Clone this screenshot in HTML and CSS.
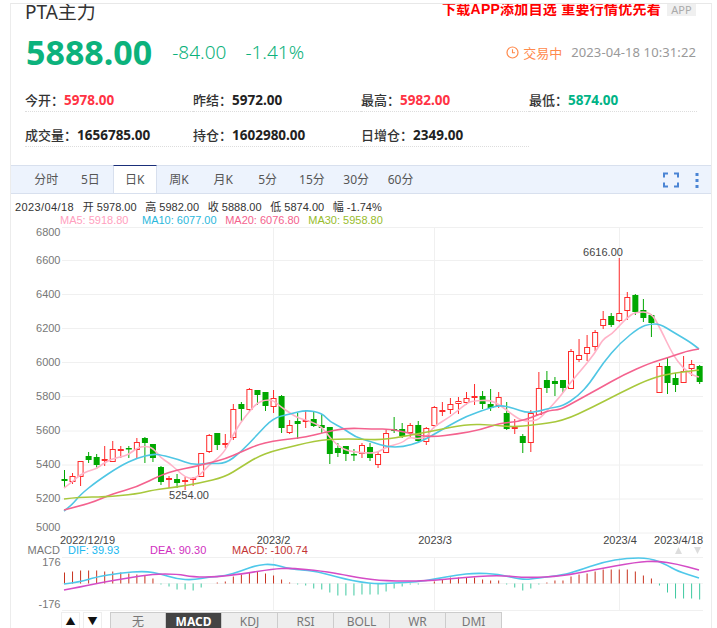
FILE: index.html
```html
<!DOCTYPE html>
<html lang="zh">
<head>
  <meta charset="UTF-8">
  <title>PTA主力</title>
  <link rel="stylesheet" href="styles.css">
</head>
<body>
  <div class="page">
    <div class="head-top">
      <h1 class="title">PTA主力</h1>
      <div class="promo">
        <span class="promo-text">下载APP添加自选 重要行情优先看</span>
        <span class="app-chip">APP</span>
      </div>
    </div>

    <div class="price-row">
      <span class="price">5888.00</span>
      <span class="change">-84.00</span>
      <span class="change pct">-1.41%</span>
      <div class="status">
        <svg class="clock" width="13" height="13" viewBox="0 0 13 13">
          <circle cx="6.5" cy="6.5" r="5.5" fill="none" stroke="#ff8a4c" stroke-width="1.2"/>
          <path d="M6.5 3.2V6.8H9" fill="none" stroke="#ff8a4c" stroke-width="1.1"/>
        </svg>
        <span class="status-text">交易中</span>
        <span class="time">2023-04-18 10:31:22</span>
      </div>
    </div>

    <div class="stats">
      <div class="stat">今开&#xFF1A;<b class="up">5978.00</b></div>
      <div class="stat">昨结&#xFF1A;<b>5972.00</b></div>
      <div class="stat">最高&#xFF1A;<b class="up">5982.00</b></div>
      <div class="stat">最低&#xFF1A;<b class="down">5874.00</b></div>
      <div class="stat">成交量&#xFF1A;<b>1656785.00</b></div>
      <div class="stat">持仓&#xFF1A;<b>1602980.00</b></div>
      <div class="stat">日增仓&#xFF1A;<b>2349.00</b></div>
    </div>

    <div class="tabs">
      <span class="tab">分时</span>
      <span class="tab">5日</span>
      <span class="tab active">日K</span>
      <span class="tab">周K</span>
      <span class="tab">月K</span>
      <span class="tab">5分</span>
      <span class="tab">15分</span>
      <span class="tab">30分</span>
      <span class="tab">60分</span>
      <div class="tools">
        <svg width="16" height="16" viewBox="0 0 16 16" fill="none" stroke="#4a84d4" stroke-width="2">
          <path d="M1 5.5V1.5H5M11 1.5H15V5.5M15 10.5V14.5H11M5 14.5H1V10.5"/>
        </svg>
        <svg width="4" height="16" viewBox="0 0 4 16" fill="#4a84d4">
          <rect x="0.5" y="1" width="3" height="3"/>
          <rect x="0.5" y="7" width="3" height="3"/>
          <rect x="0.5" y="13" width="3" height="3"/>
        </svg>
      </div>
    </div>

    <div class="info">
      <span class="info-date">2023/04/18</span>
      <span>开 5978.00</span>
      <span>高 5982.00</span>
      <span>收 5888.00</span>
      <span>低 5874.00</span>
      <span>幅 -1.74%</span>
    </div>
    <div class="ma-legend">
      <span class="ma5">MA5: 5918.80</span>
      <span class="ma10">MA10: 6077.00</span>
      <span class="ma20">MA20: 6076.80</span>
      <span class="ma30">MA30: 5958.80</span>
    </div>

    <svg id="chart" class="chart" width="701" height="385" viewBox="11 227 701 385"></svg>

    <div class="bottom">
      <div class="arrows">
        <span class="arrow">▲</span>
        <span class="arrow">▼</span>
      </div>
      <div class="indicators">
        <span class="ind">无</span>
        <span class="ind on">MACD</span>
        <span class="ind">KDJ</span>
        <span class="ind">RSI</span>
        <span class="ind">BOLL</span>
        <span class="ind">WR</span>
        <span class="ind">DMI</span>
      </div>
    </div>
  </div>

  <script>
    const NS = "http://www.w3.org/2000/svg";
    const chart = document.getElementById("chart");

    function add(tag, attrs, text) {
      const el = document.createElementNS(NS, tag);
      Object.keys(attrs).forEach(k => el.setAttribute(k, attrs[k]));
      if (text) el.textContent = text;
      chart.appendChild(el);
      return el;
    }

    function label(x, y, text, fill, anchor) {
      add("text", { x: x, y: y, fill: fill, "text-anchor": anchor || "start" }, text);
    }

    // midpoints as quadratic joins, keeps the curves soft
    function curve(pts, color, width) {
      let d = "M" + pts[0][0] + " " + pts[0][1];
      for (let i = 1; i < pts.length - 1; i++) {
        const mx = (pts[i][0] + pts[i + 1][0]) / 2;
        const my = (pts[i][1] + pts[i + 1][1]) / 2;
        d += "Q" + pts[i][0] + " " + pts[i][1] + " " + mx + " " + my;
      }
      const last = pts[pts.length - 1];
      d += "L" + last[0] + " " + last[1];
      add("path", { d: d, fill: "none", stroke: color, "stroke-width": width, "stroke-linejoin": "round" });
    }

    // grid
    const gridColor = "#f0f0f0";
    [227.5, 260.5, 294.5, 328.5, 362.5, 396.5, 431, 465, 499, 533].forEach(y => {
      add("line", { x1: 62, x2: 703, y1: y, y2: y, stroke: gridColor, "stroke-width": 1 });
    });
    [557.5, 610.5].forEach(y => {
      add("line", { x1: 62, x2: 703, y1: y, y2: y, stroke: gridColor, "stroke-width": 1 });
    });
    add("line", { x1: 62, x2: 703, y1: 583.5, y2: 583.5, stroke: "#f4f4f4", "stroke-width": 1 });
    [273.5, 434.5, 619.5].forEach(x => {
      add("line", { x1: x, x2: x, y1: 227, y2: 533, stroke: gridColor, "stroke-width": 1 });
      add("line", { x1: x, x2: x, y1: 557, y2: 610, stroke: gridColor, "stroke-width": 1 });
    });

    // hi, body top, body bottom, lo, r/g
    const candles = [
      [470,479,481,488,"g"],[473,476,481,484,"r"],[461,461,476,486,"r"],[452,456,460,463,"g"],
      [454,457,465,469,"g"],[446,459,460,466,"r"],[441,449,461,462,"r"],[446,449,450,458,"r"],
      [446,448,449,458,"g"],[438,442,449,458,"r"],[437,438,443,463,"g"],[444,444,458,462,"g"],
      [466,467,482,485,"g"],[476,478,479,488,"r"],[474,479,483,488,"g"],[477,480,480.5,490,"r"],
      [477,478,479,486,"r"],[453,453,476,477,"r"],[434,435,451,453,"r"],[433,433,445,450,"g"],
      [434,443,444,448,"r"],[404,409,437,440,"r"],[402,404,409,421,"g"],[388,389,409,412,"r"],
      [390,390,395,405,"g"],[392,392,406,411,"g"],[390,398,406,413,"r"],[395,396,428,433,"g"],
      [420,425,432,434,"r"],[413,421,424,439,"g"],[410,420,421,428,"r"],[411,419,426,427,"g"],
      [414,425,428,433,"g"],[427,427,454,464,"g"],[443,448,453,457,"g"],[446,446,454,461,"g"],
      [449,454,455,461,"g"],[443,445,453,458,"r"],[443,447,458,461,"g"],[452,454,464,468,"r"],
      [430,433,452,453,"r"],[417,429,431,433,"g"],[423,429,436,438,"g"],[423,425,432,437,"r"],
      [421,425,441,443,"g"],[427,428,441,445,"r"],[406,407,425,427,"r"],[402,410,411,416,"r"],
      [398,404,409,414,"r"],[397,401,403,414,"r"],[392,398,402,405,"r"],[384,396,397,405,"r"],
      [391,396,404,409,"g"],[389,404,408,411,"g"],[392,397,405,408,"r"],[402,413,429,430,"g"],
      [419,427,428,434,"r"],[434,436,443,453,"g"],[410,413,442,452,"r"],[372,388,414,415,"r"],
      [371,380,388,393,"g"],[377,381,384,396,"g"],[380,380,388,393,"g"],[349,351,388,389,"r"],
      [339,355,359,362,"r"],[335,347,353,361,"r"],[330,332,346,351,"r"],[311,319,325,329,"r"],
      [313,316,325,327,"g"],[258,313,320,322,"r"],[292,297,310,320,"r"],[294,295,312,315,"g"],
      [299,310,318,322,"g"],[314,315,323,337,"g"],[363,366,392,393,"r"],[357,366,383,394,"g"],
      [373,378,385,392,"g"],[356,371,382,383,"r"],[360,364,368,376,"r"],[365,366,382,384,"g"]
    ];
    const xAt = i => 64.5 + 8.04 * i;

    candles.forEach((c, i) => {
      const x = xAt(i);
      const color = c[4] === "r" ? "#ff2a2a" : "#00a800";
      add("line", { x1: x, x2: x, y1: c[0], y2: c[3], stroke: color, "stroke-width": 1 });
      if (c[4] === "r") {
        add("rect", { x: x - 2.5, y: c[1] + 0.5, width: 5, height: Math.max(c[2] - c[1], 1), fill: "#fff", stroke: color, "stroke-width": 1 });
      } else {
        add("rect", { x: x - 3, y: c[1], width: 6, height: Math.max(c[2] - c[1], 1.5), fill: color });
      }
    });

    curve([[64,488],[72,482],[80,475],[88,471],[96,469],[104,463],[112,459],[120,457],[128,455],[137,448],[145,446],[153,448],[161,458],[169,463],[177,470],[185,477],[193,479],[200,475],[209,465],[217,459],[225,451],[233,435],[241,422],[249,412],[257,403],[265,400],[273,400],[281,407],[290,413],[298,418],[306,420],[314,423],[322,427],[330,438],[343,450],[362,453],[377,453],[386,447],[402,443],[409,437],[417,439],[427,437],[433,427],[450,417],[467,403],[473,401],[490,400],[500,405],[513,415],[522,421],[537,421],[545,413],[560,397],[570,383],[583,368],[595,353],[603,339],[612,334],[620,325],[627,318],[635,312],[651,312],[660,328],[673,355],[683,368],[692,375],[699,377]], "#ffb3c8", 1.6);
    curve([[64,511],[72,505],[80,495],[96,482],[120,466],[137,458],[153,454],[161,455],[177,459],[193,465],[209,463],[225,464],[241,452],[257,435],[273,418],[290,414],[306,410],[322,413],[330,422],[343,428],[355,437],[372,442],[387,447],[403,447],[420,442],[433,435],[450,425],[467,416],[487,409],[500,405],[513,408],[527,413],[540,411],[550,408],[563,406],[578,396],[590,383],[603,363],[620,343],[640,327],[650,324],[660,324],[673,332],[690,342],[699,349]], "#4fc6e4", 1.6);
    curve([[64,510],[80,506],[96,501],[112,494],[137,487],[161,475],[177,470],[193,467],[209,463],[225,459],[241,452],[257,445],[273,441],[290,439],[306,437],[322,433],[345,428],[372,429],[393,429],[415,435],[433,437],[457,434],[480,430],[500,423],[517,422],[533,417],[550,410],[560,410],[578,400],[600,388],[623,375],[650,363],[667,358],[687,351],[699,349]], "#f4628e", 1.6);
    curve([[64,499],[80,497],[104,497],[137,494],[153,490],[177,487],[200,483],[225,477],[241,467],[257,457],[273,451],[290,447],[306,443],[322,440],[337,439],[360,439],[380,440],[400,437],[433,431],[467,424],[493,425],[513,427],[533,425],[563,421],[593,407],[620,393],[647,380],[667,374],[699,370]], "#a8c83c", 1.6);

    // macd bars, one per candle, px from zero line
    const bars = [11,12,13,13,13,12,12,11,10,9,8,5,-1,-3,-6,-6,-7,-4,0,1,2,7,9,11,12,10,8,4,1,-1,-2,-5,-6,-9,-12,-12,-12,-11,-11,-11,-8,-5,-3,-1,-1,0,2,4,6,6,6,6,4,3,3,-1,-4,-7,-5,-1,1,3,3,7,9,10,12,14,14,14,14,12,8,5,-2,-9,-15,-15,-15,-16];
    bars.forEach((h, i) => {
      if (!h) return;
      const x = xAt(i);
      add("line", { x1: x, x2: x, y1: 583.5, y2: 583.5 - h, stroke: h > 0 ? "#c8321e" : "#3ec9a0", "stroke-width": 1 });
    });
    curve([[64,584],[80,582],[96,577],[120,573],[145,571],[161,574],[177,579],[193,580],[209,577],[225,576],[241,571],[257,565],[273,564],[290,569],[314,571],[330,575],[345,579],[360,582],[377,584],[393,583],[417,582],[435,579],[457,575],[475,573],[498,574],[523,580],[538,578],[563,575],[577,571],[603,562],[627,558],[650,558],[667,565],[677,571],[699,578]], "#4fc8ea", 1.6);
    curve([[64,590],[80,587],[104,582],[128,578],[153,574],[177,574],[193,577],[217,577],[241,574],[273,569],[290,568],[322,571],[345,575],[360,578],[385,581],[427,581],[458,578],[498,575],[527,578],[563,576],[593,570],[637,562],[657,561],[677,564],[699,570]], "#d44cc6", 1.6);

    // price labels at the extremes
    label(603, 256, "6616.00", "#444", "middle");
    label(189, 499, "5254.00", "#444", "middle");

    // axis text
    [[6800,236],[6600,264],[6400,298],[6200,332],[6000,366],[5800,400],[5600,434],[5400,468],[5200,502],[5000,531]].forEach(a => {
      label(60.5, a[1], String(a[0]), "#777", "end");
    });
    label(60, 544, "2022/12/19", "#444");
    label(273.5, 544, "2023/2", "#444", "middle");
    label(435, 544, "2023/3", "#444", "middle");
    label(620, 544, "2023/4", "#444", "middle");
    label(703, 544, "2023/4/18", "#444", "end");
    label(60, 554, "MACD", "#777", "end");
    label(68, 554, "DIF: 39.93", "#19b8f0");
    label(150, 554, "DEA: 90.30", "#d030c0");
    label(232, 554, "MACD: -100.74", "#c43434");
    label(60.5, 566, "176", "#777", "end");
    label(60.5, 608, "-176", "#777", "end");
    add("path", { d: "M675 554L678.5 547L682 554Z", fill: "#ddd" });
    add("path", { d: "M694 547L701 547L697.5 554Z", fill: "#ddd" });
  </script>
</body>
</html>
```

FILE: styles.css
```css
html, body {
  margin: 0;
  padding: 0;
  background: #fff;
}

body {
  width: 717px;
  height: 628px;
  overflow: hidden;
  font-family: "Noto Sans", "Noto Sans CJK SC", sans-serif;
}

.page {
  box-sizing: border-box;
  width: 702px;
  height: 625px;
  margin: 3px 0 0 10px;
  border-top: 1px solid #e8e8e8;
  border-left: 1px solid #ececec;
  border-right: 1px solid #ececec;
}

.head-top {
  display: flex;
  justify-content: space-between;
  height: 17px;
  padding: 0 15px 0 14px;
  overflow: hidden;
}

.title {
  margin: -4px 0 0;
  font-size: 19px;
  font-weight: 400;
  line-height: 24px;
  color: #333;
}

.promo {
  display: flex;
  gap: 6px;
  height: 12px;
}

.promo-text {
  margin-top: -5px;
  font-family: "Liberation Sans", "Noto Sans CJK SC", sans-serif;
  font-size: 14px;
  font-weight: 700;
  line-height: 20px;
  letter-spacing: 0.25px;
  color: #f00;
  white-space: nowrap;
}

.app-chip {
  width: 29px;
  height: 12px;
  background: #f0f0f0;
  color: #aaa;
  font-size: 11px;
  line-height: 12px;
  text-align: center;
}

.price-row {
  display: flex;
  align-items: center;
  height: 46px;
  margin-top: 8px;
  padding: 0 15px 0 15px;
}

.price {
  font-size: 34px;
  font-weight: 700;
  color: #0cb27c;
}

.change {
  margin-left: 20px;
  font-size: 19px;
  font-weight: 300;
  color: #0cb27c;
}

.pct {
  margin-left: 19px;
}

.status {
  display: flex;
  align-items: center;
  margin-left: auto;
  font-size: 13px;
}

.status-text {
  margin-left: 4px;
  color: #ff8a4c;
}

.time {
  margin-left: 9px;
  color: #999;
  letter-spacing: 0.1px;
}

.stats {
  display: grid;
  grid-template-columns: repeat(4, 168px);
  margin: 2px 0 0 14px;
}

.stat {
  height: 35px;
  box-sizing: border-box;
  border-bottom: 1px dotted #ddd;
  padding-top: 13px;
  font-size: 13px;
  font-weight: 500;
  line-height: 20px;
  color: #333;
}

.stat b {
  font-size: 13.5px;
  color: #222;
}

.stat b.up {
  color: #ff3344;
}

.stat b.down {
  color: #00b386;
}

.tabs {
  display: flex;
  align-items: stretch;
  box-sizing: border-box;
  height: 29px;
  margin-top: 18px;
  padding-left: 13px;
  background: #edf3fd;
  border-top: 1px solid #d8e0ee;
  border-bottom: 1px solid #d8e0ee;
}

.tab {
  box-sizing: border-box;
  width: 44.3px;
  padding-top: 1px;
  font-size: 12px;
  line-height: 26px;
  color: #555;
  text-align: center;
}

.tab.active {
  height: 28px;
  margin-top: -1px;
  background: #fff;
  border-top: 1px solid #1a2f7a;
  border-left: 1px solid #d8e0ee;
  border-right: 1px solid #d8e0ee;
}

.tools {
  display: flex;
  align-items: center;
  gap: 16px;
  margin-left: auto;
  padding-right: 12px;
}

.info {
  display: flex;
  gap: 8.7px;
  margin: 6px 0 0 4px;
  font-family: "Liberation Sans", "Noto Sans CJK SC", sans-serif;
  font-size: 11px;
  line-height: 14px;
  color: #333;
  white-space: nowrap;
}

.info-date {
  letter-spacing: 0.4px;
}

.ma-legend {
  display: flex;
  gap: 8.5px;
  margin-left: 49px;
  font-family: "Liberation Sans", sans-serif;
  font-size: 11px;
  line-height: 13px;
  white-space: nowrap;
}

.ma5 {
  margin-right: 5px;
  color: #ffa0be;
}

.ma10 {
  color: #2bb8dc;
}

.ma20 {
  color: #f4628e;
}

.ma30 {
  color: #98bc2c;
}

.chart {
  display: block;
}

.chart text {
  font-family: "Liberation Sans", sans-serif;
  font-size: 11px;
}

.bottom {
  display: flex;
  margin: 0 0 0 50px;
}

.arrows {
  display: flex;
  gap: 3px;
}

.arrow {
  width: 19px;
  height: 16px;
  box-sizing: border-box;
  border: 1px solid #eee;
  border-bottom: 0;
  font-size: 10px;
  line-height: 17px;
  text-align: center;
  color: #111;
}

.indicators {
  display: flex;
  margin-left: 8px;
}

.ind {
  box-sizing: border-box;
  width: 56px;
  height: 16px;
  background: #eee;
  border: 1px solid #ccc;
  border-left-width: 0;
  border-bottom: 0;
  font-size: 12px;
  line-height: 17px;
  color: #777;
  text-align: center;
}

.ind:first-child {
  border-left-width: 1px;
}

.ind.on {
  background: #444;
  color: #fff;
  font-weight: 700;
}
```
